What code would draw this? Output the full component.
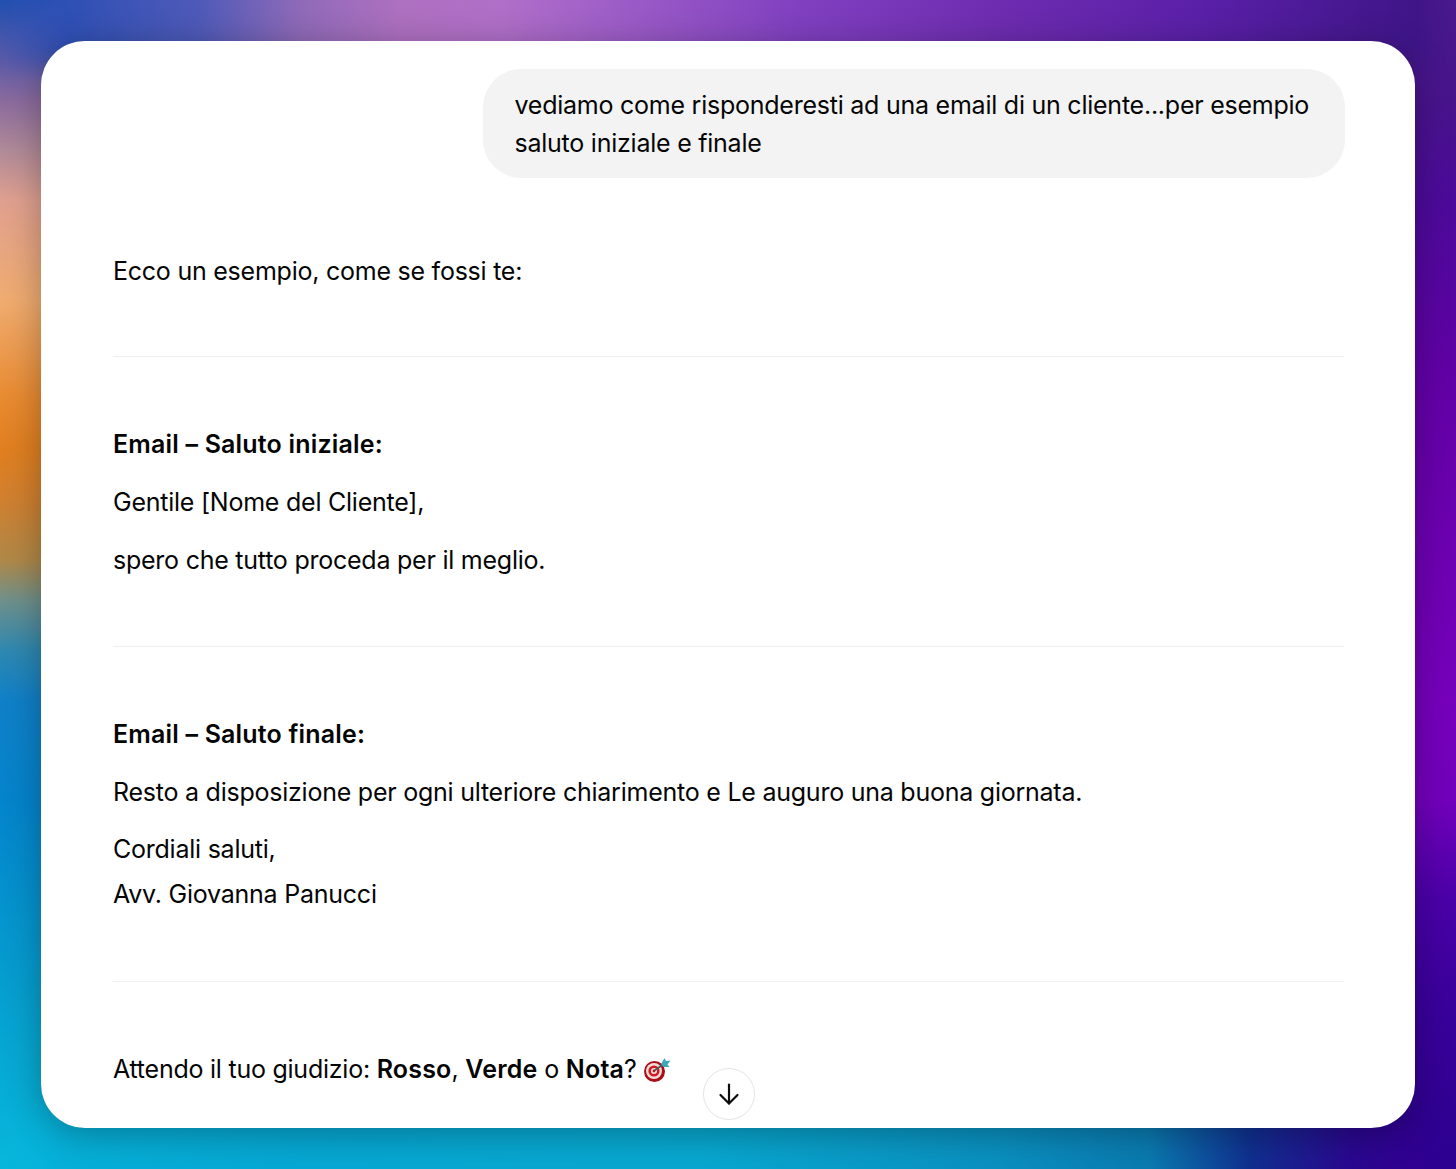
<div class="page">
	<div class="backdrop">
		<div class="wash-right"></div>
		<div class="wash-top"></div>
		<div class="wash-bottom"></div>
	</div>

	<main class="card">
		<div class="user-row">
			<div class="bubble">vediamo come risponderesti ad una email di un cliente...per esempio saluto iniziale e finale</div>
		</div>

		<div class="reply">
			<p>Ecco un esempio, come se fossi te:</p>
			<hr />
			<p><strong>Email – Saluto iniziale:</strong></p>
			<p>Gentile [Nome del Cliente],</p>
			<p>spero che tutto proceda per il meglio.</p>
			<hr class="mid" />
			<p><strong>Email – Saluto finale:</strong></p>
			<p>Resto a disposizione per ogni ulteriore chiarimento e Le auguro una buona giornata.</p>
			<p>Cordiali saluti,<br />Avv. Giovanna Panucci</p>
			<hr class="last" />
			<p>
				Attendo il tuo giudizio: <strong>Rosso</strong>, <strong>Verde</strong> o <strong>Nota</strong>?
				<svg class="dart" viewBox="0 0 28 26" width="28" height="26" aria-hidden="true">
					<circle cx="11.5" cy="14.5" r="10.5" fill="#a80f18" />
					<circle cx="11" cy="14" r="8" fill="#f2dcd8" />
					<circle cx="11" cy="14" r="5.6" fill="#cf1c24" />
					<circle cx="11" cy="14" r="3" fill="#f6e8e4" />
					<circle cx="11" cy="14" r="1.4" fill="#c8161f" />
					<path d="M11.5 13.5 L20 7.5" stroke="#4d5a62" stroke-width="1.7" />
					<path d="M18 7 L21.5 1 L23 4 L27.5 3.5 L24.5 7.5 L26.5 10 L20.5 10 Z" fill="#3fa7bd" />
				</svg>
			</p>
		</div>

		<button class="scroll-down" aria-label="Scroll down">
			<svg viewBox="0 0 24 24" width="24" height="24" fill="none" stroke="#0d0d0d" stroke-width="2.2" stroke-linecap="round" stroke-linejoin="round">
				<path d="M12 2.5V21.5" />
				<path d="M3.5 13L12 21.5L20.5 13" />
			</svg>
		</button>
	</main>
</div>

<style>
	:global(body) {
		margin: 0;
		background: #fff;
	}

	.page {
		position: relative;
		width: 1456px;
		height: 1169px;
		padding: 41px;
		box-sizing: border-box;
		overflow: hidden;
		font-family: Inter, 'Noto Sans', sans-serif;
		color: #050505;
	}

	.backdrop {
		position: absolute;
		inset: 0;
		background: linear-gradient(180deg, #2150b0 0, #5a5aa8 60px, #8a6a9e 100px, #b08a98 150px, #e0a090 200px, #f0ac70 300px, #e88a30 400px, #e07f20 450px, #d08030 500px, #b08848 560px, #70908a 600px, #2f88b0 650px, #1080c8 700px, #0484cc 800px, #06a0d0 1000px, #08b8dc 1169px);
	}

	.wash-right,
	.wash-top,
	.wash-bottom {
		position: absolute;
		left: 0;
		right: 0;
	}

	.wash-right {
		top: 0;
		bottom: 0;
		background: linear-gradient(180deg, #4a1a8c 0, #48148c 100px, #4c0a9a 200px, #6400a8 400px, #7600bc 700px, #7200bc 800px, #4a00a8 900px, #3a009c 1000px, #2c0090 1169px);
		-webkit-mask-image: linear-gradient(90deg, transparent 60%, #000 80%);
		mask-image: linear-gradient(90deg, transparent 60%, #000 80%);
	}

	.wash-top {
		top: 0;
		height: 80px;
		background: linear-gradient(90deg, rgba(40, 80, 180, 0) 0, #2f50b5 70px, #4f5ab8 200px, #8f6ab8 300px, #ae70c0 400px, #b06fc8 500px, #a060c8 600px, #8040c0 800px, #6e2cb0 1000px, #5a20a8 1200px, #3f1588 1415px, rgba(63, 21, 136, 0) 1456px);
		-webkit-mask-image: linear-gradient(180deg, #000 60%, transparent);
		mask-image: linear-gradient(180deg, #000 60%, transparent);
	}

	.wash-bottom {
		bottom: 0;
		height: 80px;
		background: linear-gradient(90deg, rgba(8, 184, 220, 0) 0, #06b0d8 60px, #06a8d4 300px, #08a8d0 700px, #0a90c0 1000px, #0a7ab0 1150px, #103090 1250px, #2a0890 1350px, #300090 1415px, rgba(48, 0, 144, 0) 1456px);
		-webkit-mask-image: linear-gradient(0deg, #000 60%, transparent);
		mask-image: linear-gradient(0deg, #000 60%, transparent);
	}

	.card {
		position: relative;
		height: 1087px;
		background: #fff;
		border-radius: 44px;
		box-shadow: 0 6px 36px rgba(0, 0, 0, 0.3);
		overflow: hidden;
		padding: 28px 71px 0 72px;
		box-sizing: border-box;
		font-size: 25px;
		letter-spacing: -0.24px;
		line-height: 44.8px;
	}

	.user-row {
		display: flex;
		justify-content: flex-end;
		margin-right: -1px;
	}

	.bubble {
		width: 862px;
		box-sizing: border-box;
		padding: 17px 32px 16px 31.5px;
		background: #f3f3f3;
		border-radius: 38px;
		line-height: 38px;
	}

	.reply {
		margin-top: 70.6px;
	}

	p {
		margin: 0 0 12.8px;
	}

	hr {
		border: 0;
		border-top: 1px solid #efefef;
		margin: 63px 0 65.1px;
	}

	hr.mid {
		margin-top: 63.4px;
	}

	hr.last {
		margin-top: 64.2px;
	}

	strong {
		font-weight: 600;
		letter-spacing: 0.18px;
	}

	.dart {
		vertical-align: -5px;
	}

	.scroll-down {
		position: absolute;
		left: 662px;
		top: 1027px;
		width: 52px;
		height: 52px;
		padding: 0;
		display: flex;
		align-items: center;
		justify-content: center;
		background: #fff;
		border: 1px solid #e5e5e5;
		border-radius: 50%;
	}
</style>
